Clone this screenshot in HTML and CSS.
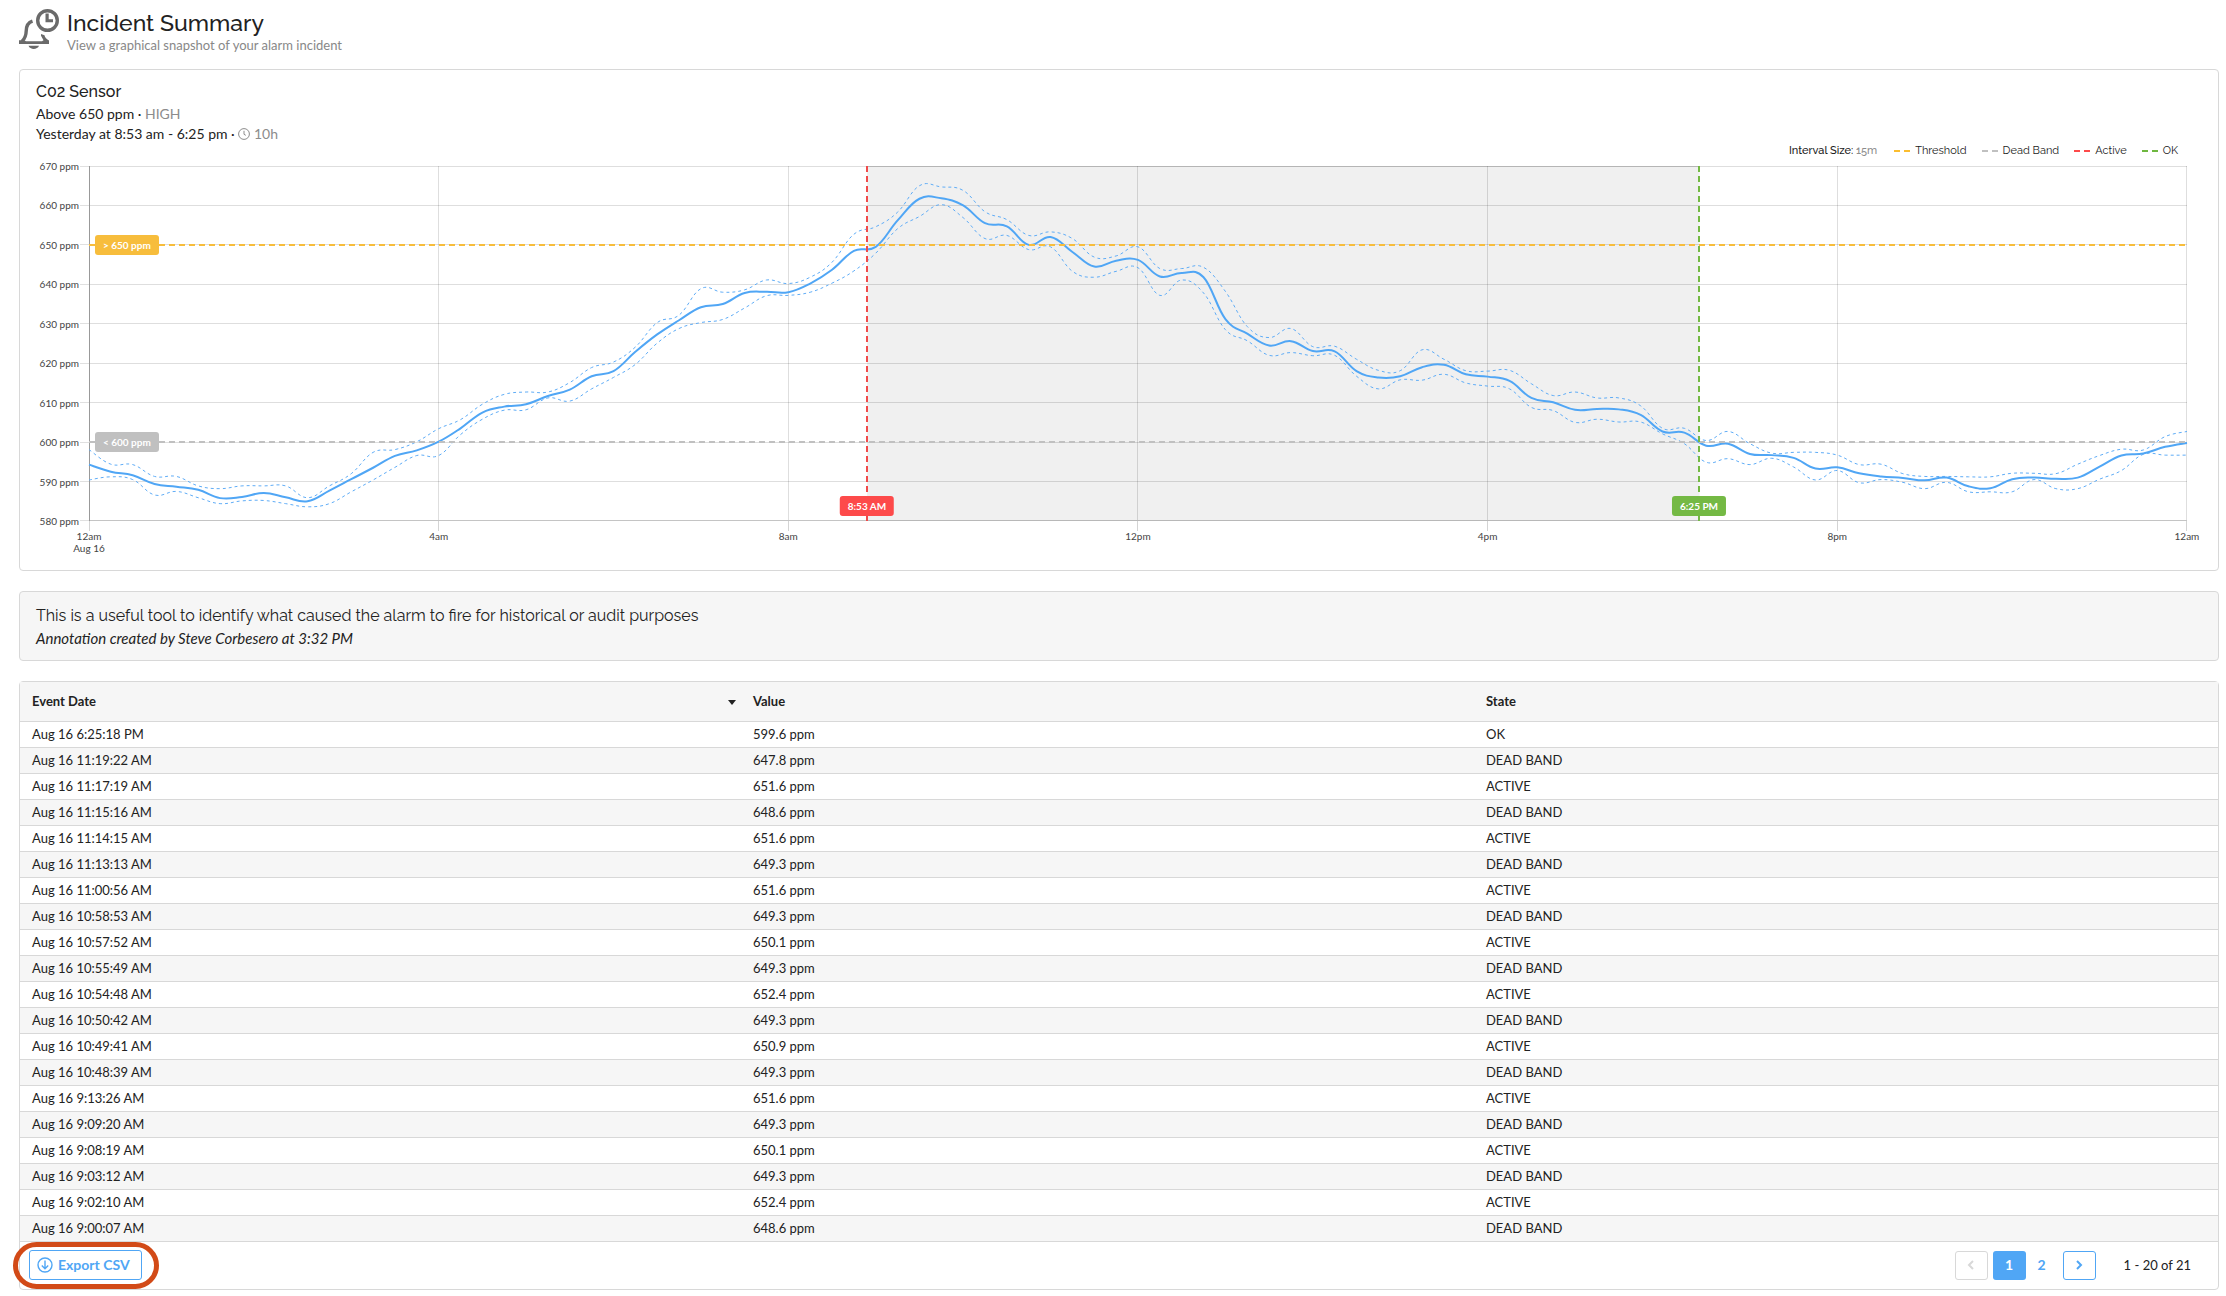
FILE: index.html
```html
<!DOCTYPE html>
<html lang="en">
<head>
<meta charset="utf-8">
<title>Incident Summary</title>
<link rel="stylesheet" href="styles.css">
</head>
<body>
<main class="page">
  <header class="page-header">
    <svg class="page-icon" viewBox="0 0 40 40" aria-hidden="true">
      <g fill="none" stroke="#6a6a6a" stroke-width="3.4">
        <circle cx="28.5" cy="11.5" r="9.8"/>
        <path d="M13.5 12.2C8.5 13.8 7.3 17.5 7.2 22c-.1 5-1.200 7.500-4.200 10.500"/>
      </g>
      <path fill="#6a6a6a" d="M26.500 4.500h3.200v5.700h4.300v3H26.500z M0 31.200h5l2 1h16l1.500-1-2.500-4.500V25l3.500 1.200c.5 2 1.500 3.300 4.500 5.300V35H0z M9.500 36.800h10.500c-1.500 4.200-9 4.200-10.500 0z"/>
    </svg>
    <div>
      <h1 class="page-title">Incident Summary</h1>
      <p class="page-subtitle">View a graphical snapshot of your alarm incident</p>
    </div>
  </header>

  <section class="card chart-card">
    <h2 class="sensor-name">C02 Sensor</h2>
    <p class="sensor-line">Above 650 ppm · <span class="muted">HIGH</span></p>
    <p class="sensor-line">Yesterday at 8:53 am - 6:25 pm · <span class="muted"><svg class="clock" viewBox="0 0 12 12" aria-hidden="true"><circle cx="6" cy="6" r="5.400"/><path d="M6 2.800V6.300l1.800 1"/></svg> 10h</span></p>

    <div class="legend">
      <span>Interval Size: <span class="muted">15m</span></span>
      <ul class="legend-list">
        <li class="legend-item threshold">Threshold</li>
        <li class="legend-item dead-band">Dead Band</li>
        <li class="legend-item active">Active</li>
        <li class="legend-item ok">OK</li>
      </ul>
    </div>

    <div class="chart">
      <div class="y-axis">
        <span>670 ppm</span><span>660 ppm</span><span>650 ppm</span><span>640 ppm</span><span>630 ppm</span><span>620 ppm</span><span>610 ppm</span><span>600 ppm</span><span>590 ppm</span><span>580 ppm</span>
      </div>
      <div class="plot">
        <svg class="plot-svg" viewBox="0 0 96 90" preserveAspectRatio="none" role="img" aria-label="CO2 level over the day">
          <path class="grid-line" d="M0 0H96M0 10H96M0 20H96M0 30H96M0 40H96M0 50H96M0 60H96M0 70H96M0 80H96M16 0V90M32 0V90M48 0V90M64 0V90M80 0V90M96 0V90"/>
          <path class="base-line" d="M0 90H96"/>
          <path class="axis-line" d="M0 0V90"/>
          <path class="incident-top" d="M35.600 0H73.700"/>
          <rect class="incident" x="35.600" y="0" width="38.100" height="90"/>
          <path class="band" id="upper"/>
          <path class="band" id="lower"/>
          <path class="mean" id="mean"/>
          <path class="marker threshold-line" d="M0 20H96"/>
          <path class="marker dead-line" d="M0 70H96"/>
          <path class="marker active-line" d="M35.600 0V90"/>
          <path class="marker ok-line" d="M73.670 0V90"/>
        </svg>
        <span class="tag tag-level tag-threshold" style="top:22.22%">&gt; 650 ppm</span>
        <span class="tag tag-level tag-dead" style="top:77.78%">&lt; 600 ppm</span>
        <span class="tag tag-time tag-active" style="left:37.08%">8:53 AM</span>
        <span class="tag tag-time tag-ok" style="left:76.74%">6:25 PM</span>
      </div>
      <div class="x-axis">
        <span>12am<br>Aug 16</span><span>4am</span><span>8am</span><span>12pm</span><span>4pm</span><span>8pm</span><span>12am</span>
      </div>
    </div>
  </section>

  <section class="card note">
    <p class="note-text">This is a useful tool to identify what caused the alarm to fire for historical or audit purposes</p>
    <p class="note-author">Annotation created by Steve Corbesero at 3:32 PM</p>
  </section>

  <section class="card events">
    <table class="event-table">
      <thead>
        <tr><th scope="col" class="col-date" aria-sort="descending"><span class="sorted">Event Date<span class="caret"></span></span></th><th scope="col" class="col-value">Value</th><th scope="col">State</th></tr>
      </thead>
      <tbody>
        <tr><td>Aug 16 6:25:18 PM</td><td>599.6 ppm</td><td>OK</td></tr>
        <tr><td>Aug 16 11:19:22 AM</td><td>647.8 ppm</td><td>DEAD BAND</td></tr>
        <tr><td>Aug 16 11:17:19 AM</td><td>651.6 ppm</td><td>ACTIVE</td></tr>
        <tr><td>Aug 16 11:15:16 AM</td><td>648.6 ppm</td><td>DEAD BAND</td></tr>
        <tr><td>Aug 16 11:14:15 AM</td><td>651.6 ppm</td><td>ACTIVE</td></tr>
        <tr><td>Aug 16 11:13:13 AM</td><td>649.3 ppm</td><td>DEAD BAND</td></tr>
        <tr><td>Aug 16 11:00:56 AM</td><td>651.6 ppm</td><td>ACTIVE</td></tr>
        <tr><td>Aug 16 10:58:53 AM</td><td>649.3 ppm</td><td>DEAD BAND</td></tr>
        <tr><td>Aug 16 10:57:52 AM</td><td>650.1 ppm</td><td>ACTIVE</td></tr>
        <tr><td>Aug 16 10:55:49 AM</td><td>649.3 ppm</td><td>DEAD BAND</td></tr>
        <tr><td>Aug 16 10:54:48 AM</td><td>652.4 ppm</td><td>ACTIVE</td></tr>
        <tr><td>Aug 16 10:50:42 AM</td><td>649.3 ppm</td><td>DEAD BAND</td></tr>
        <tr><td>Aug 16 10:49:41 AM</td><td>650.9 ppm</td><td>ACTIVE</td></tr>
        <tr><td>Aug 16 10:48:39 AM</td><td>649.3 ppm</td><td>DEAD BAND</td></tr>
        <tr><td>Aug 16 9:13:26 AM</td><td>651.6 ppm</td><td>ACTIVE</td></tr>
        <tr><td>Aug 16 9:09:20 AM</td><td>649.3 ppm</td><td>DEAD BAND</td></tr>
        <tr><td>Aug 16 9:08:19 AM</td><td>650.1 ppm</td><td>ACTIVE</td></tr>
        <tr><td>Aug 16 9:03:12 AM</td><td>649.3 ppm</td><td>DEAD BAND</td></tr>
        <tr><td>Aug 16 9:02:10 AM</td><td>652.4 ppm</td><td>ACTIVE</td></tr>
        <tr><td>Aug 16 9:00:07 AM</td><td>648.6 ppm</td><td>DEAD BAND</td></tr>
      </tbody>
    </table>
    <footer class="table-footer">
      <div class="export">
        <button type="button" class="export-button">
          <svg class="export-icon" viewBox="0 0 16 16" aria-hidden="true"><circle cx="8" cy="8" r="7"/><path d="M8 3.500v8M4.800 8.600L8 11.800l3.200-3.200"/></svg>
          Export CSV
        </button>
        <span class="highlight-ring"></span>
      </div>
      <nav class="pager" aria-label="Pages">
        <button type="button" class="page-button page-prev" aria-label="Previous page" disabled><svg class="chevron" viewBox="0 0 8 10"><path d="M6 1L2 5l4 4"/></svg></button>
        <button type="button" class="page-button page-current" aria-current="page">1</button>
        <button type="button" class="page-button page-link">2</button>
        <button type="button" class="page-button page-next" aria-label="Next page"><svg class="chevron" viewBox="0 0 8 10"><path d="M2 1l4 4-4 4"/></svg></button>
        <span class="page-range">1 - 20 of 21</span>
      </nav>
    </footer>
  </section>
</main>
<script src="script.js"></script>
</body>
</html>
```

FILE: styles.css
```css
* { box-sizing: border-box; }

body {
  margin: 0;
  background: #fff;
  color: #222;
  font-family: Lato, sans-serif;
  font-size: 14px;
  line-height: 20px;
}

h1, h2, p, ul { margin: 0; padding: 0; font-weight: 400; }

.page {
  display: flex;
  flex-direction: column;
  gap: 20px;
  padding: 9px 7px 6px 19px;
}

.page-header { display: flex; gap: 8px; height: 40px; }
.page-icon { width: 40px; height: 40px; }
.page-title { font: 500 23px/28px Raleway, "Open Sans", sans-serif; }
.page-subtitle { font-size: 13px; line-height: 16px; color: #888; }

.card { border: 1px solid #d8d8d8; border-radius: 4px; }
.muted { color: #8c8c8c; }

/* Chart card */
.chart-card { padding: 13px 31px 15px 0; }
.sensor-name { margin: 0 0 3px 16px; font: 500 16px/18px Raleway, "Open Sans", sans-serif; }
.sensor-line { margin-left: 16px; }
.clock { width: 12px; height: 12px; vertical-align: -1px; fill: none; stroke: currentColor; }

.legend {
  display: flex;
  justify-content: flex-end;
  gap: 17px;
  padding-right: 9px;
  font: 500 11px/14px Raleway, "Open Sans", sans-serif;
}
.legend-list { display: flex; gap: 15px; list-style: none; }
.legend-item { display: flex; align-items: center; gap: 5px; }
.legend-item::before {
  content: "";
  width: 16px;
  height: 2px;
  background: linear-gradient(90deg, currentColor 6px, transparent 6px 10px, currentColor 10px);
}
.threshold::before { color: #fbbd2f; }
.dead-band::before { color: #c0c0c0; }
.active::before { color: #fd4a4a; }
.ok::before { color: #6fb740; }

.chart {
  display: grid;
  grid-template: 355px auto / 69px 1fr;
  margin-top: 8px;
  font-size: 10px;
  line-height: 12px;
  color: #444;
}
.y-axis {
  display: flex;
  flex-direction: column;
  justify-content: space-between;
  margin: -6px 0;
}
.y-axis span { display: flex; align-items: center; justify-content: flex-end; gap: 1px; }
.y-axis span::after { content: ""; width: 9px; height: 1px; background: #e0e0e0; }

.plot { position: relative; }
.plot-svg { display: block; width: 100%; height: 100%; overflow: visible; }
.plot-svg path { fill: none; vector-effect: non-scaling-stroke; }
.plot-svg .grid-line, .plot-svg .incident-top { stroke: rgba(0, 0, 0, 0.13); shape-rendering: crispEdges; }
.plot-svg .base-line { stroke: #c4c4c4; shape-rendering: crispEdges; }
.plot-svg .axis-line { stroke: #999; shape-rendering: crispEdges; }
.incident { fill: rgba(0, 0, 0, 0.06); }
.band { stroke: #5eacf6; stroke-dasharray: 3 3; }
.mean { stroke: #50a6f5; stroke-width: 2; }
.marker { stroke-width: 2; stroke-dasharray: 6 4; shape-rendering: crispEdges; }
.threshold-line { stroke: #f7bd3c; }
.dead-line { stroke: #c0c0c0; }
.active-line { stroke: #f04a4a; }
.ok-line { stroke: #74b944; }

.tag {
  position: absolute;
  padding: 4px 8px;
  border-radius: 3px;
  color: #fff;
  font-weight: 700;
  white-space: nowrap;
}
.tag-level { left: 6px; transform: translateY(-50%); }
.tag-time { bottom: 5px; transform: translateX(-50%); }
.tag-threshold { background: #f7bd3c; }
.tag-dead { background: #c0c0c0; }
.tag-active { background: #fd4a4a; }
.tag-ok { background: #74b944; }

.x-axis {
  grid-column: 2;
  display: flex;
  justify-content: space-between;
  height: 34px;
  text-align: center;
}
.x-axis span {
  position: relative;
  display: flex;
  justify-content: center;
  width: 0;
  padding-top: 9px;
  white-space: nowrap;
}
.x-axis span::before {
  content: "";
  position: absolute;
  top: 0;
  width: 1px;
  height: 10px;
  background: #d4d4d4;
}

/* Annotation */
.note { padding: 13px 16px 12px; background: #f6f6f6; }
.note-text { margin-bottom: 1px; font: 400 16px/22px Raleway, "Open Sans", sans-serif; }
.note-author { font-size: 15px; font-style: italic; }

/* Event table */
.event-table { width: 100%; border-collapse: collapse; table-layout: fixed; }
.event-table th { height: 39px; padding: 0 12px; text-align: left; font-size: 13px; font-weight: 700; background: #f6f6f6; }
.event-table td { height: 26px; padding: 0 12px; line-height: 18px; font-size: 13px; border-top: 1px solid #d8d8d8; }
.event-table tbody tr:nth-child(even) { background: #f6f6f6; }
.col-date { width: 32.8%; }
.col-value { width: 33.35%; }
.sorted { display: flex; align-items: center; justify-content: space-between; }
.caret { margin: 3px -7px 0 0; border: 4px solid transparent; border-top: 5px solid #222; border-bottom: 0; }

.table-footer {
  display: flex;
  align-items: center;
  justify-content: space-between;
  height: 48px;
  padding: 0 27px 1px 9px;
  border-top: 1px solid #d8d8d8;
}
.export { position: relative; }
.export-button {
  display: flex;
  align-items: center;
  gap: 5px;
  height: 30px;
  padding: 0 11px 0 7px;
  border: 1px solid #50a6f5;
  border-radius: 3px;
  background: #fff;
  color: #50a6f5;
  font: 700 14px/20px Lato, sans-serif;
}
.export-icon { width: 16px; height: 16px; fill: none; stroke: currentColor; stroke-width: 1.4; }
.highlight-ring {
  position: absolute;
  inset: -8px -17px -9px -16px;
  border: 5px solid #d24a17;
  border-radius: 24px;
  pointer-events: none;
}

.pager { display: flex; align-items: center; gap: 5px; }
.page-button {
  display: flex;
  align-items: center;
  justify-content: center;
  width: 33px;
  height: 29px;
  padding: 0;
  border: 1px solid transparent;
  border-radius: 3px;
  background: #fff;
  color: #50a6f5;
  font: 700 14px/20px Lato, sans-serif;
}
.page-prev { border-color: #d8d8d8; color: #d8d8d8; }
.page-current { background: #50a6f5; color: #fff; }
.page-link { width: 27px; padding-right: 5px; }
.page-next { border-color: #50a6f5; }
.chevron { width: 8px; height: 10px; fill: none; stroke: currentColor; stroke-width: 2; }
.page-range { margin-left: 23px; font-size: 13px; }
```

FILE: script.js
```js
// Readings in ppm, one every 15 minutes from midnight to midnight.
const series = {
  mean: [
    594.3, 592.5, 591.6, 589.4, 588.7, 587.9, 585.8, 586.1, 587.1, 586.0, 585.0, 587.7,
    590.6, 593.5, 596.5, 597.9, 600.1, 603.5, 607.5, 609.0, 609.6, 611.7, 613.3, 616.7,
    618.0, 622.9, 627.3, 630.9, 634.2, 635.0, 637.8, 638.1, 638.0, 640.2, 643.7, 648.5,
    649.5, 656.2, 661.7, 661.8, 660.0, 655.5, 654.7, 650.0, 652.0, 648.2, 644.5, 646.0,
    646.2, 642.0, 642.9, 641.8, 631.2, 627.5, 624.5, 625.6, 623.1, 623.0, 618.0, 616.4,
    616.7, 619.0, 619.6, 617.2, 616.6, 615.5, 611.2, 610.1, 608.2, 608.4, 608.3, 606.9,
    602.7, 602.4, 599.1, 599.6, 597.0, 596.7, 596.0, 593.3, 593.6, 592.1, 591.3, 590.9,
    590.3, 591.0, 588.8, 588.3, 590.6, 591.0, 590.7, 591.0, 593.8, 596.6, 597.1, 598.8,
    599.8,
  ],
  upper: [
    598.1, 594.4, 594.3, 591.3, 591.3, 588.9, 588.2, 588.9, 588.9, 588.9, 585.9, 588.9,
    592.0, 597.4, 598.1, 600.1, 603.4, 605.7, 609.6, 612.1, 612.7, 612.7, 615.1, 618.9,
    620.3, 624.1, 630.3, 632.2, 638.9, 638.0, 638.6, 641.1, 640.2, 641.8, 645.6, 652.7,
    654.6, 658.3, 665.0, 664.7, 663.8, 658.4, 656.4, 652.4, 653.3, 651.6, 646.9, 647.2,
    649.5, 644.0, 644.0, 644.3, 638.2, 629.3, 626.5, 628.8, 624.2, 624.3, 621.0, 618.2,
    618.1, 623.4, 621.0, 618.1, 618.0, 618.2, 614.8, 611.8, 612.7, 611.2, 611.2, 609.2,
    603.5, 603.5, 600.4, 602.7, 599.6, 597.2, 597.4, 597.4, 596.7, 594.3, 594.4, 592.0,
    591.3, 591.3, 591.2, 591.2, 592.1, 592.1, 592.0, 594.4, 596.6, 598.2, 598.0, 601.4,
    602.7,
  ],
  lower: [
    590.4, 591.2, 590.5, 586.6, 587.5, 585.9, 584.4, 585.1, 585.2, 584.4, 583.6, 584.4,
    587.4, 590.4, 593.6, 596.6, 596.6, 601.9, 605.8, 608.1, 608.2, 611.2, 610.4, 613.5,
    616.4, 619.7, 625.1, 628.8, 630.3, 631.1, 634.0, 637.1, 637.2, 638.0, 640.3, 643.4,
    647.9, 654.1, 657.2, 660.2, 656.9, 651.6, 652.4, 648.8, 649.5, 643.3, 641.8, 643.3,
    644.2, 637.2, 641.1, 637.8, 628.5, 625.7, 622.0, 622.7, 621.9, 622.0, 616.7, 613.5,
    615.8, 615.7, 617.2, 615.0, 614.2, 613.5, 608.8, 608.0, 605.0, 605.8, 605.1, 605.1,
    602.1, 599.6, 594.9, 595.8, 594.3, 595.9, 593.7, 590.4, 592.8, 589.7, 590.5, 589.8,
    588.2, 589.8, 587.4, 587.4, 587.4, 590.5, 588.2, 588.2, 590.6, 592.8, 596.9, 596.7,
    596.7,
  ],
};

const TOP_PPM = 670;
const TENSION = 0.2;

// Smooth cubic path through the readings.
function smoothPath(values) {
  const y = values.map((v) => TOP_PPM - v);
  const slope = (i) => {
    const a = Math.max(i - 1, 0);
    const b = Math.min(i + 1, y.length - 1);
    return { dx: (b - a) * TENSION, dy: (y[b] - y[a]) * TENSION };
  };
  let d = `M0 ${y[0]}`;
  for (let i = 1; i < y.length; i++) {
    const s = slope(i - 1);
    const e = slope(i);
    d += `C${i - 1 + s.dx} ${y[i - 1] + s.dy} ${i - e.dx} ${y[i] - e.dy} ${i} ${y[i]}`;
  }
  return d;
}

for (const name of Object.keys(series)) {
  document.getElementById(name).setAttribute("d", smoothPath(series[name]));
}
```
